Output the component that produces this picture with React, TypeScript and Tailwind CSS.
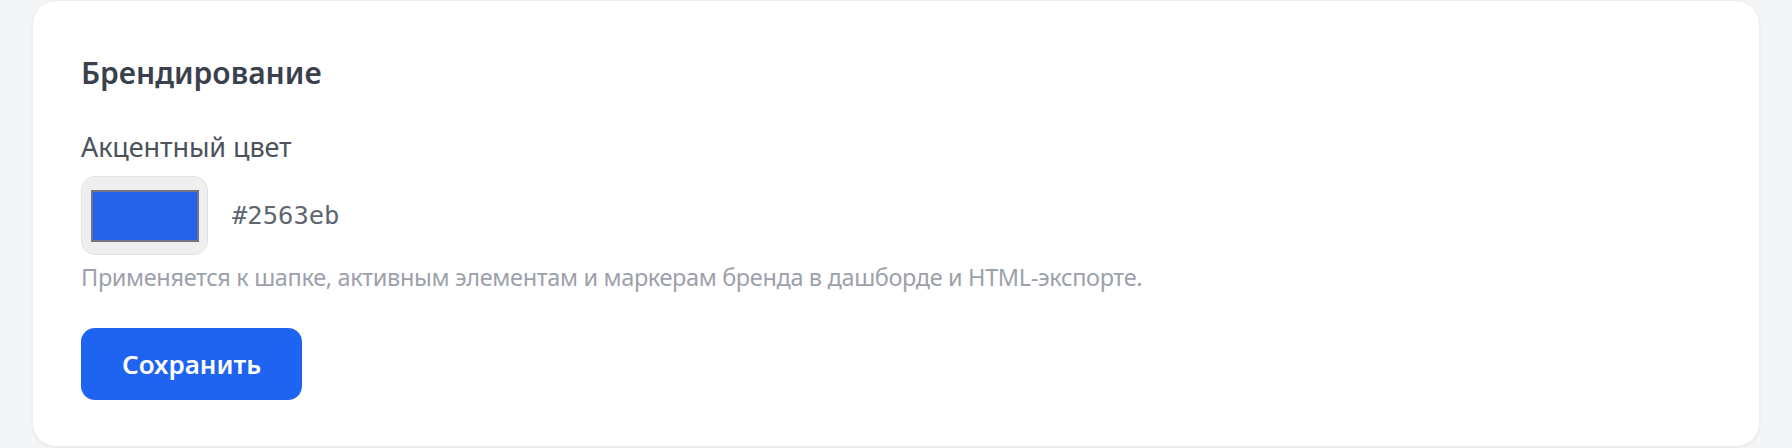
export default function App() {
  return (
    <div className="min-h-[448px] bg-[#f4f5f7] px-[32px]" style={{ fontFamily: '"Noto Sans", "Open Sans", sans-serif' }}>
      <section className="h-[447px] rounded-[24px] bg-white border border-[#eceef1] shadow-[0_1px_3px_rgba(0,0,0,0.06)] pl-[48px] pt-[52px]">
        <h2 className="text-[30px] leading-[40px] font-semibold text-[#3a414c]">Брендирование</h2>

        <label className="block mt-[36px] text-[27px] leading-[36px] tracking-[-0.1px] text-[#4b525c]">Акцентный цвет</label>

        <div className="flex items-center gap-[24px] mt-[11px]">
          <div className="w-[127px] h-[79px] rounded-[14px] bg-[#efefef] border border-[#e3e3e3] flex items-center justify-center">
            <div className="w-[108px] h-[52px] bg-[#2563eb] border-2 border-[#747484]" />
          </div>
          <span className="text-[25.5px] text-[#5f6670]" style={{ fontFamily: '"DejaVu Sans Mono", "Liberation Mono", monospace' }}>
            #2563eb
          </span>
        </div>

        <p className="mt-[5px] text-[23.5px] leading-[35px] tracking-[-0.35px] text-[#9ca1ab]">
          Применяется к шапке, активным элементам и маркерам бренда в дашборде и HTML-экспорте.
        </p>

        <button className="mt-[33px] h-[72px] px-[41px] rounded-[14px] bg-[#1f64f0] text-white text-[26px] font-semibold">
          Сохранить
        </button>
      </section>
    </div>
  )
}
